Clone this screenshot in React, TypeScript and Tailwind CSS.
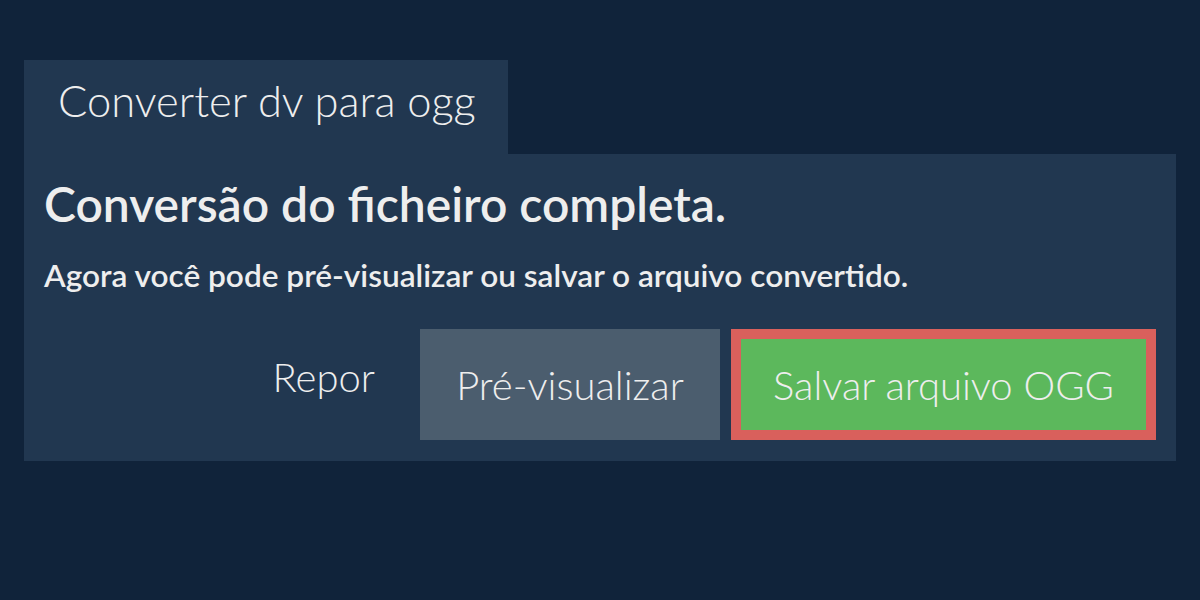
import React from 'react';

const font = { fontFamily: 'Lato, "Noto Sans", sans-serif' };

export default function App() {
  return (
    <div className="h-[600px] w-[1200px] bg-[#10233a] px-6 pt-[60px] text-[#eeeeee]" style={font}>
      <div className="inline-block bg-[#213750] pb-[14px] pl-[34px] pr-[32px] text-[43.5px] font-light leading-[80px]">
        Converter dv para ogg
      </div>
      <section className="bg-[#213750] px-[20px] pb-[21px] pt-[22px]">
        <h1 className="text-[48px] font-semibold leading-[56px]">Conversão do ficheiro completa.</h1>
        <p className="mt-[23px] text-[31.6px] font-semibold leading-[40px]">
          Agora você pode pré-visualizar ou salvar o arquivo convertido.
        </p>
        <div className="mt-[34px] flex items-stretch justify-end gap-[11px]">
          <button className="px-[34px] pb-[16px] text-[40px] font-light">Repor</button>
          <button className="h-[111px] w-[300px] bg-[#4b5d6e] text-[40px] font-light">Pré-visualizar</button>
          <button className="h-[111px] w-[425px] border-[10px] border-[#d9605c] bg-[#5cb85c] text-[40px] font-light">
            Salvar arquivo OGG
          </button>
        </div>
      </section>
    </div>
  );
}
